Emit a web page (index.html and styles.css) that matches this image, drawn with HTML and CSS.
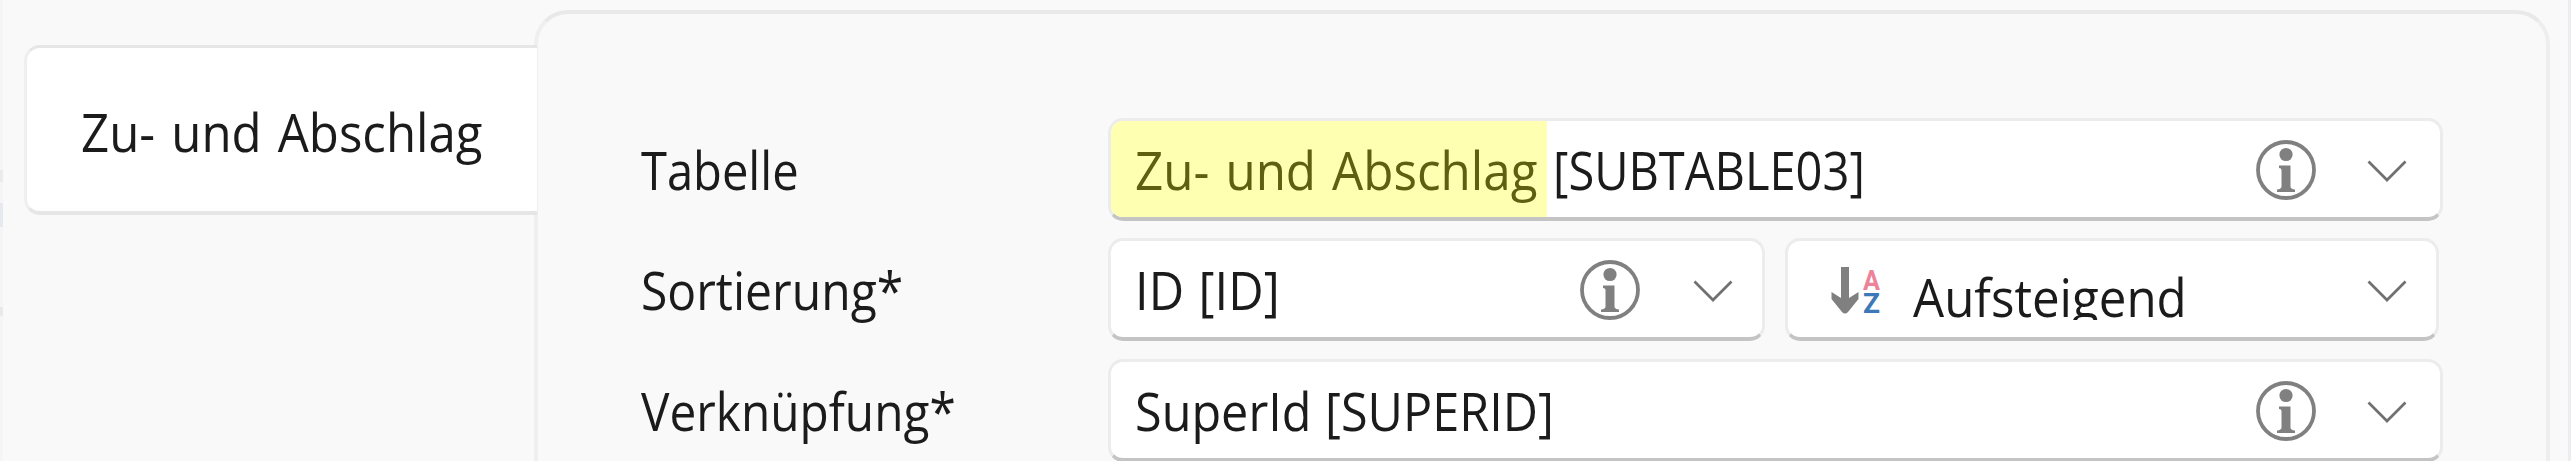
FILE: index.html
```
<!DOCTYPE html>
<html lang="de">
<head>
<meta charset="utf-8">
<title>Zu- und Abschlag</title>
<link rel="stylesheet" href="styles.css">
</head>
<body>
<svg class="defs" width="0" height="0">
  <symbol id="info" viewBox="0 0 62 62">
    <circle cx="31" cy="31" r="28" fill="none" stroke="#808080" stroke-width="3.8"/>
    <circle cx="31" cy="15.5" r="6.6" fill="#808080"/>
    <path d="M24 26.500h11.500v21q0 2.500 4.500 3v2.500h-18v-2.500q4.500-.5 4.500-3v-16.500q0-2-2.500-2z" fill="#808080"/>
  </symbol>
  <symbol id="chevron" viewBox="0 0 40 24">
    <path d="M1.500 2.500L20 21L38.500 2.500" fill="none" stroke="#707070" stroke-width="2.700"/>
  </symbol>
</svg>
<main class="page">
  <nav class="tabs"><div class="tab"><span class="text t-tab">Zu- und Abschlag</span></div></nav>
  <section class="panel">
    <div class="row">
      <label class="label"><span class="text l1">Tabelle</span></label>
      <div class="field">
        <span class="mark"><span class="text t-mark">Zu- und Abschlag</span></span><span class="value text t-sub">[SUBTABLE03]</span>
        <svg class="info"><use href="#info"/></svg><svg class="chevron"><use href="#chevron"/></svg>
      </div>
    </div>
    <div class="row">
      <label class="label"><span class="text l2">Sortierung*</span></label>
      <div class="field id">
        <span class="value first text t-id">ID [ID]</span>
        <svg class="info"><use href="#info"/></svg><svg class="chevron"><use href="#chevron"/></svg>
      </div>
      <div class="field order">
        <svg class="sort" viewBox="0 0 50 50">
          <path d="M14 2V43" stroke="#808080" stroke-width="8"/>
          <path d="M.5 27L10 33H18L27.500 27V34L17 47Q14 50 11 47L.5 34Z" fill="#808080"/>
          <text x="32" y="24.500" textLength="17" lengthAdjust="spacingAndGlyphs" fill="#ec8399">A</text>
          <text x="32" y="48" textLength="17" lengthAdjust="spacingAndGlyphs" fill="#3d78b8">Z</text>
        </svg>
        <span class="clip"><span class="text t-auf">Aufsteigend</span></span>
        <svg class="chevron"><use href="#chevron"/></svg>
      </div>
    </div>
    <div class="row">
      <label class="label"><span class="text l3">Verknüpfung*</span></label>
      <div class="field">
        <span class="value first text t-super">SuperId [SUPERID]</span>
        <svg class="info"><use href="#info"/></svg><svg class="chevron"><use href="#chevron"/></svg>
      </div>
    </div>
  </section>
</main>
</body>
</html>
```
FILE: styles.css
```
* { box-sizing: border-box; }
body {
  margin: 0;
  width: 2571px;
  height: 461px;
  overflow: hidden;
  background: #f9f9f9;
  color: #1b1b1b;
  font: 52.5px/72px "Open Sans", "Noto Sans", sans-serif;
  white-space: nowrap;
}
.defs { display: block; height: 0; }
.page {
  display: flex;
  height: 461px;
  overflow: hidden;
  padding-left: 3px;
  border-right: 3px solid #ededf1;
  background: linear-gradient(#f5f5f6 170px, #ebebed 170px 182px, #f5f5f6 182px 203px, #e7e9f0 203px 227px, #f5f5f6 227px 307px, #e9e9ea 307px 316px, #f5f5f6 316px) left / 3px 100% no-repeat;
}
.text { display: inline-block; transform-origin: 0 50%; flex: none; }
.t-tab { transform: scaleX(.937); word-spacing: 3.5px; }
.t-mark { transform: scaleX(.939); word-spacing: 3.5px; }
.t-sub { transform: scaleX(.896); }
.t-id { transform: scaleX(.93); word-spacing: 2px; }
.t-super { transform: scaleX(.925); word-spacing: 1px; }
.t-auf { transform: scaleX(.938); }
.l1 { transform: scaleX(.897); }
.l2 { transform: scaleX(.915); }
.l3 { transform: scaleX(.91); }
.tabs { width: 531px; padding: 45px 0 0 21px; flex: none; }
.tab {
  position: relative;
  height: 170px;
  width: 513px;
  padding: 48px 0 0 54px;
  background: #fff;
  border: 3px solid #e6e6e6;
  border-bottom-width: 4px;
  border-left-color: #efefef;
  border-right: 0;
  border-radius: 16px 0 0 16px;
}
.panel {
  width: 2016px;
  height: 520px;
  margin-top: 10px;
  padding: 104px 0 0 103px;
  flex: none;
  border: 4px solid #e9e9e9;
  border-left-color: #efefef;
  border-right-color: #eeeeee;
  border-radius: 34px;
  background: #f9f9f9;
}
.row { display: flex; height: 103px; margin-bottom: 17.3px; }
.label { width: 467px; flex: none; padding-top: 16px; }
.field {
  width: 1335px;
  height: 103px;
  display: flex;
  align-items: center;
  padding-right: 33px;
  background: #fff;
  border: 3px solid #ececec;
  border-bottom: 4px solid #c4c4c4;
  border-radius: 15px;
  overflow: hidden;
}
.id { width: 657px; margin-right: 20px; padding-right: 29px; }
.id .info { margin-right: 52px; }
.order { width: 654px; padding-right: 29px; }
.mark {
  width: 436px;
  height: 97px;
  padding: 13px 0 0 24px;
  background: #ffffb1;
  color: #5f5f10;
  flex: none;
}
.value { margin: 2px 0 0 6px; }
.value.first { margin-left: 24px; }
.info { width: 62px; height: 62px; margin-left: auto; margin-right: 50px; margin-top: 2px; flex: none; }
.chevron { width: 40px; height: 24px; flex: none; margin-top: 4px; }
.order .chevron { margin-left: auto; }
.sort { width: 50px; height: 50px; margin-left: 43px; margin-top: 2px; flex: none; font: bold 28px Roboto, sans-serif; }
.clip { height: 59px; margin: 2px 0 0 32px; overflow: hidden; }
```
